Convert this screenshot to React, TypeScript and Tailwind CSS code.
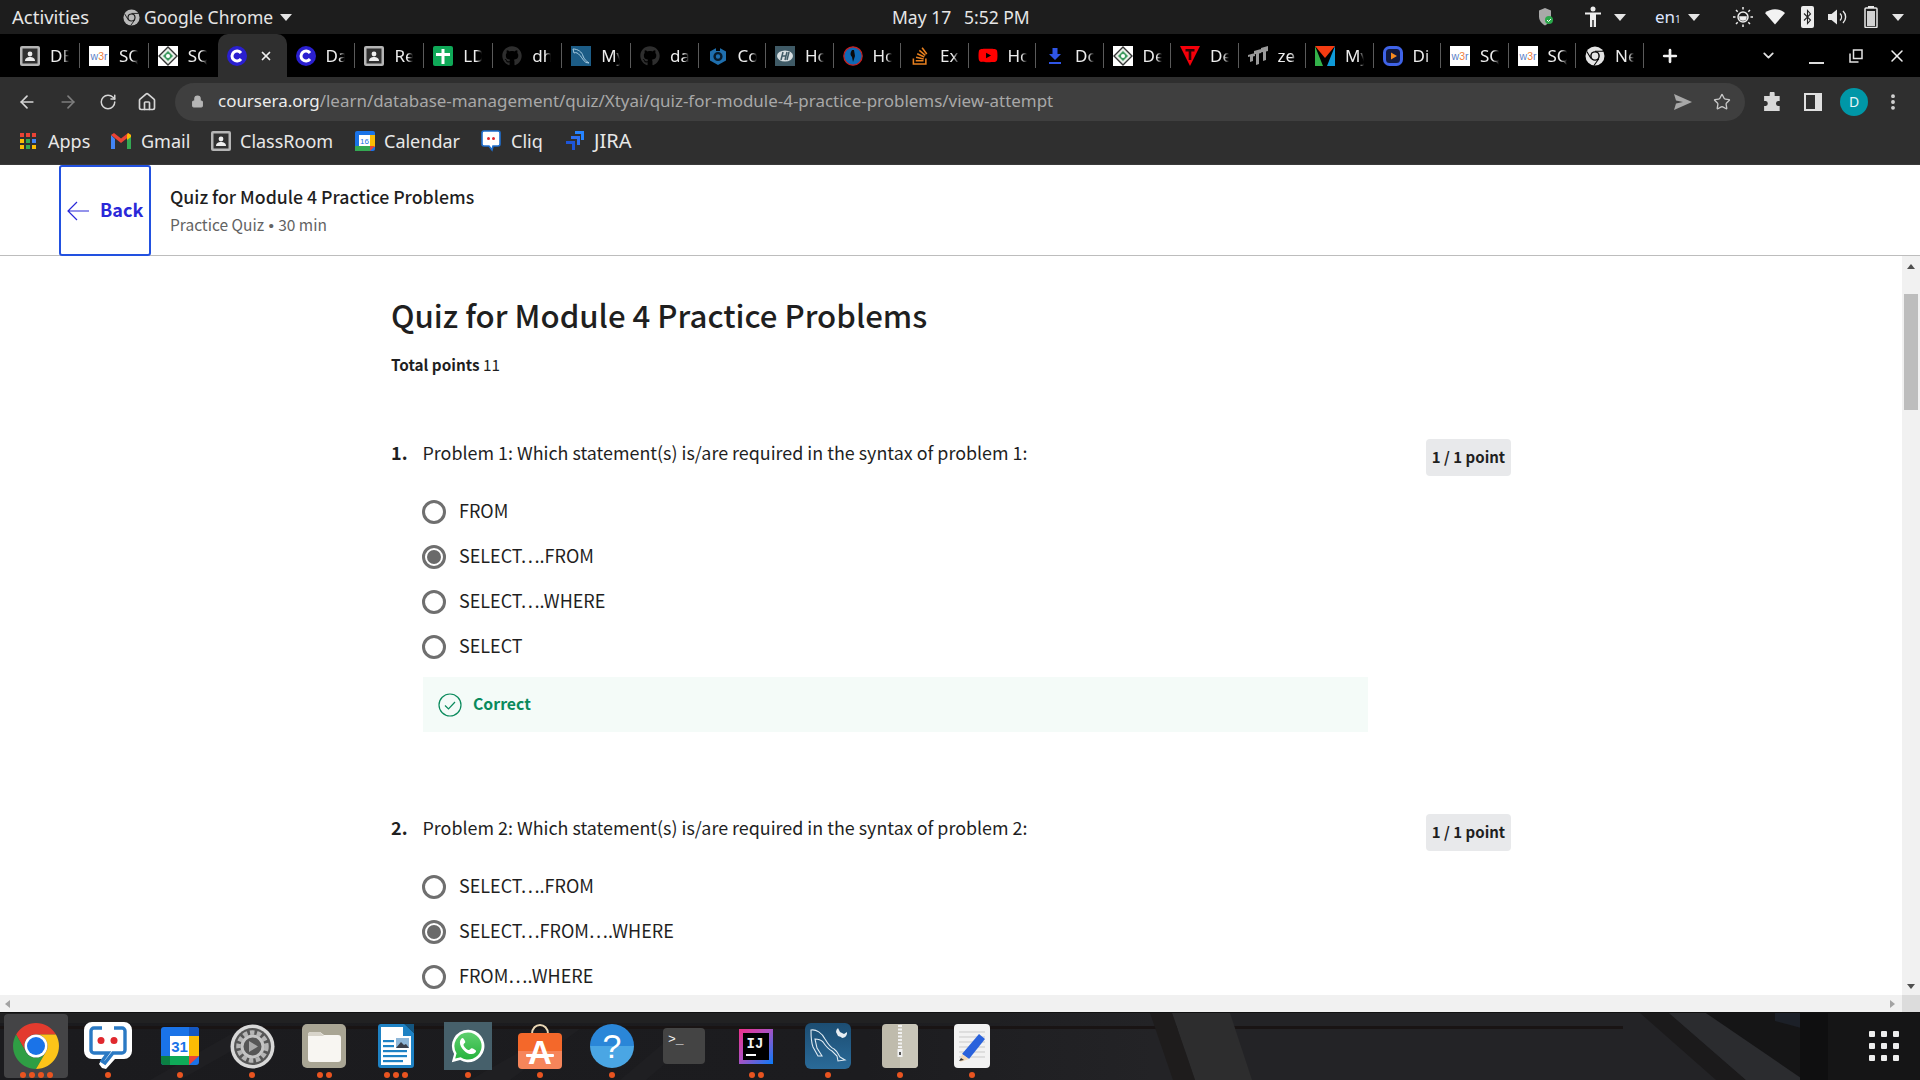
import React from "react";
import { FaGithub, FaStackOverflow, FaYoutube } from "react-icons/fa";
import { ArrowLeft, ArrowRight, RotateCw, Home, Lock, Star, MoreVertical, Plus, ChevronDown, X } from "lucide-react";

const W3 = () => (
  <svg width="20" height="20" viewBox="0 0 20 20"><rect width="20" height="20" fill="#fff" />
    <text x="10" y="13.5" textAnchor="middle" fontSize="10.5" fontFamily="Liberation Sans" fill="#5b7fc7">w<tspan fill="#f0803c">3</tspan>r</text></svg>
);
const Diamond = () => (
  <svg width="20" height="20" viewBox="0 0 20 20"><rect width="20" height="20" fill="#fff" />
    <path d="M10 1 19 10 10 19 1 10Z" fill="#e8efe8" stroke="#333" strokeWidth="1.4" />
    <path d="M10 5 15 10 10 15 5 10Z" fill="#3d9a5f" /><circle cx="10" cy="10" r="2" fill="#fff" /></svg>
);
const Person = () => (
  <svg width="20" height="20" viewBox="0 0 20 20"><rect width="20" height="20" rx="2" fill="#b5b5b5" /><rect x="2.5" y="2.5" width="15" height="15" fill="#303030" />
    <circle cx="10" cy="8" r="2.4" fill="#eee" /><path d="M5 15c0-3 2.5-4 5-4s5 1 5 4z" fill="#eee" /></svg>
);
const CIcon = () => (
  <svg width="20" height="20" viewBox="0 0 20 20"><circle cx="10" cy="10" r="10" fill="#2a1fd0" />
    <path d="M14 7a5 5 0 1 0 0 6" fill="none" stroke="#fff" strokeWidth="3" /></svg>
);
const Cross = () => (
  <svg width="20" height="20" viewBox="0 0 20 20"><rect width="20" height="20" rx="2" fill="#0fa958" /><path d="M8.5 3h3v4H17v3h-5.500v8h-3v-8H3V7h5.500z" fill="#fff" /></svg>
);
const MySql = () => (
  <svg width="20" height="20" viewBox="0 0 20 20"><rect width="20" height="20" fill="#1c5c86" /><path d="M2 3c5 0 9 3 10 7 1 3 3 5 6 7l-3-.5c-3-2-4-5-6-7C7 7 5 6 3 7z" fill="none" stroke="#a7cbe0" strokeWidth="1" /></svg>
);
const Hex = () => (
  <svg width="20" height="20" viewBox="0 0 20 20"><path d="M10 1 18 5.500v9L10 19 2 14.500v-9z" fill="#1f6fae" /><circle cx="10" cy="10.500" r="3.400" fill="none" stroke="#071a2a" strokeWidth="2.400" /><rect x="8" y="0" width="4" height="5" fill="#000" /></svg>
);
const HP = () => (
  <svg width="20" height="20" viewBox="0 0 20 20"><rect width="20" height="20" fill="#3f5a66" /><ellipse cx="10" cy="10" rx="8" ry="5.500" fill="#d8dfe2" /><path d="M8 6 6 14M12 6l-2 8M6.500 10h5M14 6l-2 8" stroke="#3f5a66" strokeWidth="1.500" /></svg>
);
const Globe = () => (
  <svg width="20" height="20" viewBox="0 0 20 20"><circle cx="10" cy="10" r="9.200" fill="#0f69b5" stroke="#c9201f" strokeWidth="1.200" /><path d="M9 4c-2 3-2 5 0 7l1 5 2-6-1-6z" fill="#0a0a0a" /></svg>
);
const Down = () => (
  <svg width="20" height="20" viewBox="0 0 20 20"><path d="M7.500 2h5v6H16l-6 6-6-6h3.500z" fill="#2f55e6" /><rect x="4" y="16" width="12" height="2" fill="#2f55e6" /></svg>
);
const Tee = () => (
  <svg width="20" height="20" viewBox="0 0 20 20"><path d="M0 0h20L10 20z" fill="#f5000a" /><path d="M5.500 3h9v2.400h-3.200V14H8.700V5.400H5.500z" fill="#2a0406" /></svg>
);
const Steps = () => (
  <svg width="20" height="20" viewBox="0 0 20 20"><path d="M0 9l7-2v3l-2 .5V15l-3 1v-5.500L0 11zM6 5l7-2v4l-2 .5V18l-3 1V8L6 8.500zM13 2 20 0v5l-2 .5V14l-3 1V6l-2 .5z" fill="#9a9a9a" /></svg>
);
const MV = () => (
  <svg width="20" height="20" viewBox="0 0 20 20"><rect width="20" height="20" fill="#000" /><path d="M0 0h20L10 12z" fill="#f53c12" /><path d="M0 0v20h8z" fill="#33b24a" /><path d="M20 0v20h-8z" fill="#0e9ad8" /></svg>
);
const Play = () => (
  <svg width="20" height="20" viewBox="0 0 20 20"><rect x="1.500" y="1.500" width="17" height="17" rx="5" fill="#10193f" stroke="#3f63e8" strokeWidth="3" /><path d="M8 6.500 14 10l-6 3.500z" fill="#f58a1f" /></svg>
);
const ChromeGrey = ({ size = 20, c = "#e4e4e4", bg = "#000" }: { size?: number; c?: string; bg?: string }) => (
  <svg width={size} height={size} viewBox="0 0 20 20"><circle cx="10" cy="10" r="9.500" fill={c} /><circle cx="10" cy="10" r="4.800" fill={bg} /><circle cx="10" cy="10" r="3.400" fill={c} /><path d="M10 5.200h8.500M6 12.500 1.800 5.500M13.800 12.800 9 19.500" stroke={bg} strokeWidth="1.100" /></svg>
);

const tabs: { t: string; i: React.ReactNode; active?: boolean; wide?: boolean }[] = [
  { t: "DB", i: <Person />, wide: true }, { t: "SQL", i: <W3 />, wide: true }, { t: "SQL", i: <Diamond />, wide: true }, { t: "", i: <CIcon />, active: true, wide: true },
  { t: "Da", i: <CIcon />, wide: true }, { t: "Re", i: <Person />, wide: true }, { t: "LD", i: <Cross />, wide: true },
  { t: "dh", i: <FaGithub size={20} color="#2e2e2e" />, wide: true }, { t: "My", i: <MySql />, wide: true },
  { t: "da", i: <FaGithub size={20} color="#2e2e2e" /> }, { t: "Co", i: <Hex /> }, { t: "Ho", i: <HP /> }, { t: "Ho", i: <Globe /> },
  { t: "Ex", i: <FaStackOverflow size={20} color="#e8801f" /> }, { t: "Ho", i: <FaYoutube size={21} color="#f00" /> },
  { t: "Do", i: <Down /> }, { t: "De", i: <Diamond /> }, { t: "De", i: <Tee /> }, { t: "ze", i: <Steps /> },
  { t: "My", i: <MV /> }, { t: "Di", i: <Play /> }, { t: "SQL", i: <W3 /> }, { t: "SQL", i: <W3 /> },
  { t: "Ne", i: <ChromeGrey /> },
];

const Caret = ({ c = "#e4e4e4" }: { c?: string }) => <div className="w-0 h-0 border-l-[6px] border-r-[6px] border-t-[7px] border-l-transparent border-r-transparent" style={{ borderTopColor: c }} />;

const TopBar = () => (
  <div className="h-[34px] shrink-0 bg-[#1d1d1d] text-[#e6e6e6] text-[17.5px] flex items-center">
    <span className="ml-[12px] w-[111px] text-[18.500px] whitespace-nowrap">Activities</span>
    <ChromeGrey size={17} c="#b9b9b9" bg="#1d1d1d" />
    <span className="ml-[4px] w-[136px] whitespace-nowrap">Google Chrome</span>
    <Caret />
    <span className="ml-[600px] w-[72px] whitespace-nowrap">May 17</span>
    <span className="w-[70px] whitespace-nowrap">5:52 PM</span>
    <div className="ml-[505px] flex items-center">
      <svg width="14" height="18" viewBox="0 0 14 18"><path d="M6 0 12 2.500v6c0 4-2.500 7-6 9-3.500-2-6-5-6-9v-6z" fill="#a9a9a9" /><circle cx="10" cy="12" r="4" fill="#2aa84a" /><path d="m8 12 1.500 1.500L12 11" stroke="#fff" fill="none" /></svg>
      <svg className="ml-[31px]" width="18" height="22" viewBox="0 0 18 22"><circle cx="9" cy="3" r="2.500" fill="#eee" /><path d="M1 6.500h16v2h-5V21H9.700v-7H8.300v7H6V8.500H1z" fill="#eee" /></svg>
      <div className="ml-[12px]"><Caret /></div>
      <span className="ml-[29px] w-[33px] text-[17px] text-[#dfe6ff] whitespace-nowrap">en<span className="text-[10px]">1</span></span>
      <Caret />
      <svg className="ml-[33px]" width="20" height="20" viewBox="0 0 20 20" fill="none" stroke="#eee" strokeWidth="1.500"><circle cx="10" cy="10" r="5" /><path d="M10 0v2.500M10 17.500V20M0 10h2.500M17.500 10H20M3 3l1.700 1.700M15.300 15.300 17 17M3 17l1.700-1.700M15.300 4.700 17 3" /><path d="M7 10a3 3 0 0 0 6 0z" fill="#eee" /></svg>
      <svg className="ml-[12px]" width="20" height="16" viewBox="0 0 20 16"><path d="M10 15.500 0 4c5.500-5 14.500-5 20 0z" fill="#f2f2f2" /></svg>
      <div className="ml-[16px] w-[13px] h-[22px] rounded-[2px] bg-[#ececec] flex items-center justify-center">
        <svg width="9" height="16" viewBox="0 0 9 16" fill="none" stroke="#222" strokeWidth="1.100"><path d="M1 4.500 7.500 11 4.500 14.500V1.500L7.500 5 1 11.500" /></svg>
      </div>
      <svg className="ml-[14px]" width="20" height="18" viewBox="0 0 20 18"><path d="M0 6h3.500L9 1.500v15L3.500 12H0z" fill="#e8e8e8" /><path d="M12 5.500c2 2 2 5 0 7M15 3c3.500 3.500 3.500 8.500 0 12" fill="none" stroke="#e8e8e8" strokeWidth="1.400" /></svg>
      <svg className="ml-[16px]" width="14" height="22" viewBox="0 0 14 22"><rect x="4" y="0" width="6" height="2" fill="#e8e8e8" /><rect x="1" y="2" width="12" height="19.500" rx="1" fill="none" stroke="#e8e8e8" strokeWidth="1.500" /><rect x="3" y="5" width="8" height="15" fill="#d2d2d2" /></svg>
      <div className="ml-[14px]"><Caret /></div>
    </div>
  </div>
);

const TabStrip = () => (
  <div className="h-[43px] shrink-0 bg-black flex pl-[11px] text-[#ededed] text-[17px]">
    {tabs.map((tb, i) => (
      <div key={i} className={`shrink-0 flex items-center pl-[9px] relative ${tb.wide ? "w-[68.900px]" : "w-[67.500px]"} ${tb.active ? "bg-[#2f2f2f] rounded-t-[10px]" : ""}`}>
        <div className="w-5 h-5 shrink-0 flex items-center justify-center">{tb.i}</div>
        {tb.active ? (
          <X size={14} strokeWidth={3} className="ml-[12px] text-[#f0f0f0]" />
        ) : (
          <span className="ml-[10px] w-[19px] overflow-hidden whitespace-nowrap [mask-image:linear-gradient(90deg,#000_70%,transparent)]">{tb.t}</span>
        )}
        {!tb.active && (!tabs[i + 1] || !tabs[i + 1].active) && (
          <div className="absolute right-0 top-[9px] h-[25px] w-px bg-[#5a5a5a]" />
        )}
      </div>
    ))}
    <div className="ml-[16px] flex items-center"><Plus size={20} strokeWidth={3.200} color="#f2f2f2" /></div>
    <div className="ml-[80px] flex items-center"><ChevronDown size={17} strokeWidth={2.500} color="#e0e0e0" /></div>
    <div className="ml-[32px] flex items-center pt-[14px]"><div className="w-[15px] h-[2px] bg-[#dcdcdc]" /></div>
    <div className="ml-[25px] flex items-center">
      <svg width="14" height="14" viewBox="0 0 14 14" fill="none" stroke="#e4e4e4" strokeWidth="1.500"><path d="M4.500 1h8.500v8.500H4.500zM1 4.500v8.500h8.500" /></svg>
    </div>
    <div className="ml-[24px] flex items-center"><X size={20} strokeWidth={1.800} color="#f0f0f0" /></div>
  </div>
);

const Toolbar = () => (
  <div className="h-[45px] shrink-0 bg-[#2f2f2f] flex items-center pt-[4px] text-[#d6d6d6]">
    <ArrowLeft size={20} className="ml-[17px]" />
    <ArrowRight size={20} className="ml-[21px] text-[#7e7e7e]" />
    <RotateCw size={18} className="ml-[21px]" />
    <Home size={20} className="ml-[20px]" />
    <div className="ml-[18px] h-[38px] w-[1570px] rounded-full bg-[#3f3f3f] flex items-center">
      <Lock size={13} fill="#b5b5b5" color="#b5b5b5" className="ml-[16px]" />
      <span className="ml-[14px] w-[1456px] pb-[2px] text-[16.950px] whitespace-nowrap text-[#a8a8a8]"><span className="text-[#ececec]">coursera.org</span>/learn/database-management/quiz/Xtyai/quiz-for-module-4-practice-problems/view-attempt</span>
      <svg width="18" height="16" viewBox="0 0 18 16"><path d="M0 0 18 8 0 16l2-6.500L9 8 2 6.500z" fill="#a8a8a8" /></svg>
      <Star size={18} strokeWidth={1.800} color="#c8c8c8" className="ml-[21px]" />
    </div>
    <svg className="ml-[18px]" width="20" height="20" viewBox="0 0 18 18"><path d="M6 1.500a2.200 2.200 0 0 1 4.500 0V3.500H15v4.500h-1.500a2.300 2.300 0 0 0 0 4.500H15V17H1v-4.500h1.500a2.300 2.300 0 0 0 0-4.500H1V3.500h5z" fill="#d8d8d8" /></svg>
    <svg className="ml-[21px]" width="18" height="18" viewBox="0 0 18 18"><rect width="18" height="18" fill="#e0e0e0" /><rect x="2" y="2" width="9" height="14" fill="#2f2f2f" /></svg>
    <div className="ml-[18px] w-[28px] h-[28px] rounded-full bg-[#0097a7] text-[#e8f6f8] text-[14px] flex items-center justify-center">D</div>
    <MoreVertical size={20} strokeWidth={2.600} className="ml-[15px]" />
  </div>
);

const AppsIcon = () => (
  <div className="grid grid-cols-3 gap-[1.500px] w-[16px] h-[16px]">
    {["#ea4335", "#ea4335", "#ea4335", "#fbbc04", "#34a853", "#4285f4", "#fbbc04", "#34a853", "#fbbc04"].map((c, i) => <div key={i} style={{ background: c }} />)}
  </div>
);
const GCal = () => (
  <svg width="20" height="20" viewBox="0 0 20 20"><rect width="20" height="20" rx="2" fill="#1a73e8" /><rect x="15" y="4" width="5" height="12" fill="#fbbc04" /><rect y="15" width="15" height="5" fill="#34a853" /><path d="M15 15h5l-5 5z" fill="#ea4335" /><rect x="4" y="4" width="11" height="11" fill="#fff" /><text x="9.500" y="13" textAnchor="middle" fontSize="8" fontFamily="Liberation Sans" fill="#1a73e8">16</text></svg>
);
const CliqSmall = () => (
  <svg width="20" height="22" viewBox="0 0 20 22"><path d="M3 1h14a2 2 0 0 1 2 2v11a2 2 0 0 1-2 2h-5l-1 4-3-4H3a2 2 0 0 1-2-2V3a2 2 0 0 1 2-2z" fill="#fff" stroke="#1e6fd0" strokeWidth="1.600" /><circle cx="7.500" cy="8.500" r="1.500" fill="#e0282e" /><circle cx="12.500" cy="8.500" r="1.500" fill="#e0282e" /></svg>
);
const Jira = () => (
  <svg width="20" height="20" viewBox="0 0 20 20"><path d="M10 0h9v9h-3V3h-6z" fill="#2684ff" /><path d="M6 5h9v9h-3V8H6z" fill="#2d6ff0" /><path d="M1 10h9v9H7v-6H1z" fill="#1d55d8" /></svg>
);
const Gmail = () => (
  <svg width="20" height="16" viewBox="0 0 20 16"><path d="M0 2v14h4V6z" fill="#4285f4" /><path d="M20 2v14h-4V6z" fill="#34a853" /><path d="M0 2 10 10 20 2 17 0l-7 5.500L3 0z" fill="#ea4335" /><path d="M17 0l3 2v2l-4 3V2z" fill="#fbbc04" /></svg>
);

const Bookmarks = () => (
  <div className="h-[42px] shrink-0 bg-[#2f2f2f] flex items-center pb-[4px] text-[18px] text-[#e8e8e8]">
    <div className="ml-[20px] w-[28px]"><AppsIcon /></div><span className="w-[63px]">Apps</span>
    <Gmail /><span className="ml-[10px] w-[70px]">Gmail</span>
    <Person /><span className="ml-[9px] w-[115px]">ClassRoom</span>
    <GCal /><span className="ml-[9px] w-[97px]">Calendar</span>
    <CliqSmall /><span className="ml-[10px] w-[54px]">Cliq</span>
    <Jira /><span className="ml-[9px] text-[20px]">JIRA</span>
  </div>
);

const Radio = ({ on }: { on?: boolean }) => (
  <div className="w-[24px] h-[24px] rounded-full border-[3px] border-[#6f6f6f] flex items-center justify-center shrink-0">
    {on && <div className="w-[14px] h-[14px] rounded-full bg-[#6a6a6a]" />}
  </div>
);
const Option = ({ label, on }: { label: string; on?: boolean }) => (
  <div className="h-[45px] flex items-center gap-[13px] text-[18px] text-[#1f1f1f]"><Radio on={on} /><span className="pb-[2px]">{label}</span></div>
);
const Question = ({ n, text, children }: { n: number; text: string; children: React.ReactNode }) => (
  <div className="w-[1120px]">
    <div className="flex items-start">
      <span className="w-[31.500px] text-[18px] leading-[26px] font-bold text-[#1f1f1f]">{n}.</span>
      <span className="flex-1 text-[17.900px] leading-[26px] text-[#1f1f1f]">{text}</span>
      <div className="w-[85px] h-[37px] rounded-[4px] bg-[#e8e9eb] text-[15px] font-bold text-[#1f1f1f] flex items-center justify-center">1 / 1 point</div>
    </div>
    <div className="pl-[31px] mt-[13px]">{children}</div>
  </div>
);

const Dot = () => <div className="w-[6px] h-[6px] rounded-full bg-[#e95420]" />;

const DockItem = ({ dots = 1, children, active, tile }: { dots?: number; children: React.ReactNode; active?: boolean; tile?: boolean }) => (
  <div className="w-[72px] h-full shrink-0 flex flex-col items-center relative">
    {active && <div className="absolute left-[4px] top-[1px] w-[64px] h-[64px] rounded-[4px] bg-[#444446]" />}
    <div className={`relative w-[48px] h-[48px] mt-[9px] shrink-0 flex items-center justify-center ${tile ? "bg-[#46606b]" : ""}`}>{children}</div>
    <div className="relative flex gap-[3px] mt-[2px]">{Array.from({ length: dots }).map((_, i) => <Dot key={i} />)}</div>
  </div>
);

const Wallpaper = () => (
  <svg className="absolute inset-0" width="1920" height="67" viewBox="0 0 1920 67">
    <defs><linearGradient id="wp" x1="0" y1="0" x2="1" y2="0"><stop offset="0" stopColor="#1b1b1e" /><stop offset="0.45" stopColor="#1c1c1f" /><stop offset="0.6" stopColor="#232326" /><stop offset="1" stopColor="#232326" /></linearGradient></defs>
    <rect width="1920" height="67" fill="url(#wp)" />
    <rect width="1000" height="10" fill="#212122" />
    <rect y="13" width="1623" height="3" fill="#191414" />
    <path d="M560 16 470 67h40l70-51zM240 16l-90 51h30l90-51zM680 16l-60 51h26l60-51z" fill="#1f1f22" />
    <path d="M1172 0h58l22 67h-57z" fill="#2d2d2e" />
    <path d="M1150 0h22l23 67h-22z" fill="#1e1c1c" />
    <path d="M1640 0h29l77 67h-30z" fill="#1b1a1b" />
    <path d="M1669 0h37l98 67h-58z" fill="#2b2c2f" />
    <path d="M1706 0h214v67h-116z" fill="#151516" />
    <path d="M1775 0h30l12 6-12 10-30-8z" fill="#1c2028" />
    <path d="M1800 0h28v67h-28z" fill="#0f0f10" />
  </svg>
);

const Dock = () => (
  <div className="h-[68px] shrink-0 bg-[#212124] border-t border-[#111] flex items-stretch relative overflow-hidden">
    <Wallpaper />
    <DockItem dots={4} active>
      <svg width="48" height="48" viewBox="0 0 48 48">
        <path d="M4.100 12.500A23 23 0 0 1 43.900 12.500H24A11.500 11.500 0 0 0 14 30Z" fill="#e33b2e" />
        <path d="M4.100 12.500A23 23 0 0 0 24 47L34 29.800A11.500 11.500 0 0 1 14 30Z" fill="#2f9e44" />
        <path d="M43.900 12.500H24A11.500 11.500 0 0 1 34 29.800L24 47A23 23 0 0 0 43.900 12.500Z" fill="#fcc419" />
        <circle cx="24" cy="24" r="11.500" fill="#fff" /><circle cx="24" cy="24" r="9" fill="#1a73e8" />
      </svg>
    </DockItem>
    <DockItem>
      <svg width="48" height="48" viewBox="0 0 48 48">
        <path d="M8 0h32a8 8 0 0 1 8 8v21a8 8 0 0 1-8 8H31l-9 10-4-1-3-4 3-5H8a8 8 0 0 1-8-8V8a8 8 0 0 1 8-8z" fill="#fff" />
        <path d="M18 6H10a3 3 0 0 0-3 3v19a3 3 0 0 0 3 3h14l-6 8 3 2 8-10h9a3 3 0 0 0 3-3V9a3 3 0 0 0-3-3h-8" fill="none" stroke="#2a79c4" strokeWidth="3.400" />
        <circle cx="17" cy="18.500" r="3.500" fill="#e0282e" /><circle cx="30" cy="18.500" r="3.500" fill="#e0282e" />
      </svg>
    </DockItem>
    <DockItem>
      <svg width="38" height="38" viewBox="0 0 38 38"><rect width="38" height="38" rx="3" fill="#1a73e8" /><rect x="28" y="9" width="10" height="20" fill="#fbbc04" /><rect x="9" y="29" width="19" height="9" fill="#0fa958" /><path d="M0 29h9v9H3a3 3 0 0 1-3-3z" fill="#0b8043" /><path d="M28 29h10L28 38z" fill="#ea4335" /><path d="M28 0h7a3 3 0 0 1 3 3v6H28z" fill="#1557c0" /><rect x="9" y="9" width="19" height="20" fill="#fff" /><text x="18.500" y="25" textAnchor="middle" fontSize="15" fontWeight="700" fontFamily="Liberation Sans" fill="#1a73e8">31</text></svg>
    </DockItem>
    <DockItem>
      <svg width="45" height="45" viewBox="0 0 45 45"><circle cx="22.500" cy="22.500" r="22" fill="#d8d8d8" /><circle cx="22.500" cy="22.500" r="18.500" fill="#565656" /><circle cx="22.500" cy="22.500" r="14" fill="none" stroke="#b5b5b5" strokeWidth="4.500" strokeDasharray="4.500 2.500" /><circle cx="22.500" cy="22.500" r="10.500" fill="none" stroke="#c4c4c4" strokeWidth="3" /><path d="M19 17l9 5.500-9 5.500z" fill="#a8a8a8" /></svg>
    </DockItem>
    <DockItem dots={2}>
      <svg width="44" height="44" viewBox="0 0 44 44"><rect width="44" height="44" rx="5" fill="#a9a594" /><path d="M6 11a3 3 0 0 1 3-3h9l4 3h14a3 3 0 0 1 3 3v21a3 3 0 0 1-3 3H9a3 3 0 0 1-3-3z" fill="#f8f6f2" /><path d="M6 11a3 3 0 0 1 3-3h9l4 4H6z" fill="#d8d4ca" /></svg>
    </DockItem>
    <DockItem dots={3}>
      <svg width="36" height="44" viewBox="0 0 36 44"><path d="M3 0h24l9 9v32a3 3 0 0 1-3 3H3a3 3 0 0 1-3-3V3a3 3 0 0 1 3-3z" fill="#1e82c4" /><path d="M3 3h22v9h8v29H3z" fill="#fff" /><path d="M26 0h10v9z" fill="#14557f" /><rect x="5" y="16" width="11" height="2.200" fill="#1e82c4" /><rect x="5" y="21" width="11" height="2.200" fill="#1e82c4" /><rect x="5" y="26" width="24" height="2.200" fill="#1e82c4" /><rect x="5" y="31" width="24" height="2.200" fill="#1e82c4" /><rect x="5" y="36" width="20" height="2.200" fill="#1e82c4" /><rect x="18" y="14" width="13" height="10" fill="#8fb7d8" /><path d="m18 24 5-6 3 3 2-1 3 4z" fill="#3a3f4a" /></svg>
    </DockItem>
    <DockItem tile>
      <svg width="36" height="36" viewBox="0 0 40 40"><defs><linearGradient id="wa" x1="0" y1="0" x2="0" y2="1"><stop offset="0" stopColor="#5fd06f" /><stop offset="1" stopColor="#27b33d" /></linearGradient></defs><path d="M20 2a18 18 0 0 0-15.500 27L2 38l9.300-2.400A18 18 0 1 0 20 2z" fill="#fff" /><path d="M20 5a15 15 0 0 0-12.700 23L5.800 34l6-1.500A15 15 0 1 0 20 5z" fill="url(#wa)" /><path d="M14 11c-1 0-3 2-3 5 0 6 7 13 13 13 3 0 5-2 5-3.500 0-1-4-3-5-3-1 0-2 2-3 2-2 0-6-4-6-6 0-1 2-2 2-3 0-1-2-4.500-3-4.500z" fill="#fff" /></svg>
    </DockItem>
    <DockItem>
      <svg width="44" height="46" viewBox="0 0 44 46"><defs><linearGradient id="st" x1="0" y1="0" x2="0" y2="1"><stop offset="0" stopColor="#f4682a" /><stop offset="0.500" stopColor="#f4682a" /><stop offset="0.510" stopColor="#f6855a" /><stop offset="1" stopColor="#f6855a" /></linearGradient></defs><path d="M14 11C14 -1 30 -1 30 11" fill="none" stroke="#e8d6b4" strokeWidth="2" /><rect y="10" width="44" height="36" rx="4" fill="url(#st)" /><text x="22" y="41" textAnchor="middle" fontSize="33" fontWeight="700" fontFamily="Liberation Sans" fill="#fff">A</text><rect x="8" y="31" width="28" height="3" rx="1" fill="#fff" /></svg>
    </DockItem>
    <DockItem>
      <svg width="44" height="44" viewBox="0 0 44 44"><defs><linearGradient id="hp" x1="0" y1="0" x2="0" y2="1"><stop offset="0" stopColor="#2a86d8" /><stop offset="0.500" stopColor="#2a86d8" /><stop offset="0.510" stopColor="#4aa6e4" /><stop offset="1" stopColor="#4aa6e4" /></linearGradient></defs><circle cx="22" cy="22" r="22" fill="url(#hp)" /><text x="22" y="34" textAnchor="middle" fontSize="34" fontFamily="Liberation Sans" fill="#fff">?</text></svg>
    </DockItem>
    <DockItem dots={0}>
      <svg width="42" height="36" viewBox="0 0 42 36"><rect width="42" height="36" rx="4" fill="#444" /><text x="5" y="15" fontSize="13" fontFamily="Liberation Mono" fill="#f2f2f2">&gt;_</text></svg>
    </DockItem>
    <DockItem dots={2}>
      <svg width="34" height="35" viewBox="0 0 34 35"><defs><linearGradient id="ij" x1="0" y1="0" x2="1" y2="1"><stop offset="0" stopColor="#f0308a" /><stop offset="0.450" stopColor="#b04fc0" /><stop offset="1" stopColor="#087cfa" /></linearGradient></defs><rect width="34" height="35" fill="url(#ij)" /><rect x="4" y="4" width="26" height="27" fill="#000" /><text x="16" y="18.500" textAnchor="middle" fontSize="14" fontWeight="700" fontFamily="Liberation Mono" fill="#f2f2f2">IJ</text><rect x="7" y="25" width="10" height="2" fill="#fff" /></svg>
    </DockItem>
    <DockItem>
      <svg width="46" height="46" viewBox="0 0 46 46"><defs><linearGradient id="ms" x1="0" y1="0" x2="0" y2="1"><stop offset="0" stopColor="#1c4d72" /><stop offset="1" stopColor="#2a6a98" /></linearGradient></defs><rect width="46" height="46" rx="6" fill="url(#ms)" /><path d="M6 7c5-1 11 3 14 9 3 5 6 9 9 10 3 2 4 5 6 8l5 3-7 1-1-5-5-5c-4-2-7-6-9-9-3-3-6-3-8-3l2 9 5 8-4 0-5-9c-2-5-2-12-2-17z" fill="none" stroke="#dfeaf2" strokeWidth="1.100" /><path d="M33 5l2 4 4 2 3-2a5 5 0 0 1-5 6l-1-1-3-1-2-4a5 5 0 0 1 2-4z" fill="#e8eef3" /></svg>
    </DockItem>
    <DockItem>
      <svg width="36" height="44" viewBox="0 0 36 44"><rect width="36" height="44" rx="4" fill="#bfbbac" /><path d="M18 0h14a4 4 0 0 1 4 4v36a4 4 0 0 1-4 4H18z" fill="#c9c6b9" /><path d="M18 1v24" stroke="#f2f2f2" strokeWidth="4" strokeDasharray="2 1.500" /><rect x="15.500" y="25" width="5" height="8" fill="#f2f2f2" /><rect x="17" y="28" width="2" height="3" fill="#555" /></svg>
    </DockItem>
    <DockItem>
      <svg width="36" height="44" viewBox="0 0 36 44"><rect width="36" height="44" rx="4" fill="#f2f2f2" /><path d="M5 8h26M5 13h26M5 18h26M5 23h26M5 28h26M5 33h26" stroke="#c9c9c9" strokeWidth="1" /><path d="M25 10l6 5-16 20-7-5z" fill="#2a62dc" /><path d="M8 30l7 5-9 3z" fill="#f2d9b8" /><path d="M5 37l2-3 3 2z" fill="#333" /></svg>
    </DockItem>
    <div className="ml-auto mr-[21px] mb-[2px] self-center grid grid-cols-3 gap-[6px] relative">
      {Array.from({ length: 9 }).map((_, i) => <div key={i} className="w-[6px] h-[6px] rounded-[1px] bg-[#eeeeee]" />)}
    </div>
  </div>
);

export default function App() {
  return (
    <div className="w-[1920px] h-[1080px] overflow-hidden flex flex-col bg-white [font-family:'Noto_Sans',sans-serif]">
      <TopBar />
      <TabStrip />
      <Toolbar />
      <Bookmarks />
      <div className="flex-1 min-h-0 flex flex-col bg-white border-t border-[#3a3a3a] [font-family:'Noto_Sans_CJK_SC',sans-serif]">
        <div className="h-[91px] shrink-0 border-b border-[#bdbdbd] flex">
          <div className="ml-[59px] w-[92px] h-[91px] border-2 border-[#2251e0] rounded-[3px] flex items-center">
            <svg className="ml-[5px]" width="23" height="22" viewBox="0 0 23 22" fill="none" stroke="#2a28d8" strokeWidth="1.200"><path d="M23 11H2M11 2l-9 9 9 9" /></svg>
            <span className="ml-[11px] pb-[2px] text-[18px] font-bold text-[#2a28d8]">Back</span>
          </div>
          <div className="ml-[19px] flex flex-col pt-[17px]">
            <span className="text-[17.700px] leading-[28px] font-medium text-[#1f1f1f]">Quiz for Module 4 Practice Problems</span>
            <span className="text-[15.500px] leading-[28px] text-[#636363]">Practice Quiz<span className="[font-family:'Liberation_Sans',sans-serif]"> • </span>30 min</span>
          </div>
        </div>
        <div className="flex-1 min-h-0 flex">
          <div className="flex-1 min-w-0 overflow-hidden pl-[391px]">
            <h1 className="mt-[37px] text-[31.200px] leading-[44px] font-medium text-[#1f1f1f]">Quiz for Module 4 Practice Problems</h1>
            <p className="mt-[15px] text-[15.300px] leading-[24px] text-[#1f1f1f]"><b>Total points</b> 11</p>
            <div className="mt-[63px]">
              <Question n={1} text="Problem 1: Which statement(s) is/are required in the syntax of problem 1:">
                <Option label="FROM" />
                <Option label="SELECT….FROM" on />
                <Option label="SELECT….WHERE" />
                <Option label="SELECT" />
                <div className="mt-[8px] ml-[1px] w-[945px] h-[55px] bg-[#f4fbf8] flex items-center pl-[15px]">
                  <svg width="24" height="24" viewBox="0 0 24 24" fill="none" stroke="#0a8a5c" strokeWidth="1.200"><circle cx="12" cy="12" r="11" /><path d="m7 12.500 3.500 3.500L17 9" /></svg>
                  <span className="ml-[11px] pb-[2px] text-[15.800px] font-bold text-[#0a8a5c]">Correct</span>
                </div>
              </Question>
            </div>
            <div className="mt-[82px]">
              <Question n={2} text="Problem 2: Which statement(s) is/are required in the syntax of problem 2:">
                <Option label="SELECT….FROM" />
                <Option label="SELECT…FROM….WHERE" on />
                <Option label="FROM….WHERE" />
              </Question>
            </div>
          </div>
          <div className="w-[18px] shrink-0 bg-[#f1f1f1] flex flex-col items-center">
            <div className="mt-[8px] w-0 h-0 border-l-[4px] border-r-[4px] border-b-[5px] border-l-transparent border-r-transparent border-b-[#505050]" />
            <div className="mt-[25px] w-[14px] h-[116px] bg-[#bdbdbd]" />
            <div className="mt-auto mb-[6px] w-0 h-0 border-l-[4px] border-r-[4px] border-t-[5px] border-l-transparent border-r-transparent border-t-[#505050]" />
          </div>
        </div>
        <div className="h-[17px] shrink-0 bg-[#f1f1f1] flex items-center">
          <div className="ml-[5px] w-0 h-0 border-t-[4px] border-b-[4px] border-r-[5px] border-t-transparent border-b-transparent border-r-[#a3a3a3]" />
          <div className="ml-auto mr-[7px] w-0 h-0 border-t-[4px] border-b-[4px] border-l-[5px] border-t-transparent border-b-transparent border-l-[#a3a3a3]" />
          <div className="w-[18px] h-full bg-[#dcdcdc]" />
        </div>
      </div>
      <Dock />
    </div>
  );
}
